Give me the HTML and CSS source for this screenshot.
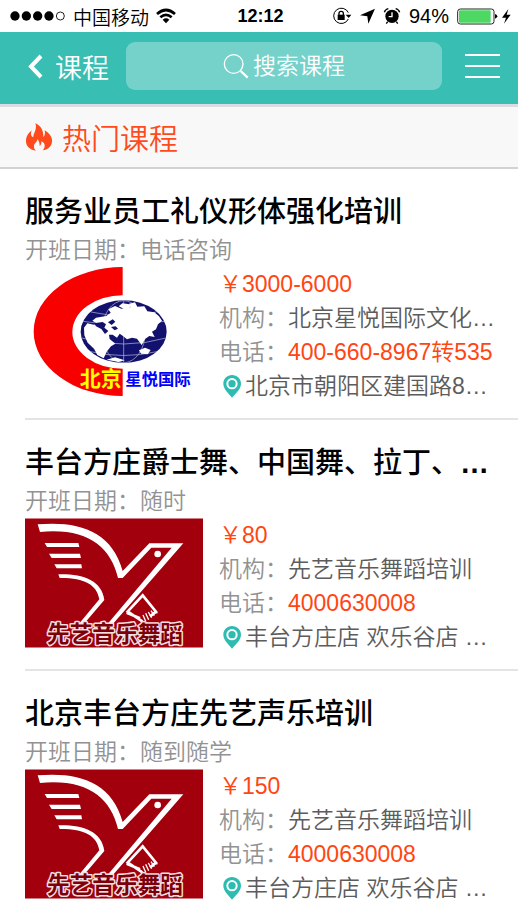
FILE: index.html
```html
<!DOCTYPE html>
<html lang="zh-CN">
<head>
<meta charset="utf-8">
<meta name="viewport" content="width=device-width, initial-scale=1">
<title>课程</title>
<link rel="stylesheet" href="styles.css">
</head>
<body>
<svg class="sprite" aria-hidden="true">
  <symbol id="pin" viewBox="38 342 54 72">
    <path d="M65 345C50 345 39 356 39 371C39 386 52 397 65 413C79 397 92 386 92 371C92 356 80 345 65 345Z" fill="#2fbcb0"/>
    <circle cx="65" cy="371" r="14" fill="none" stroke="#fff" stroke-width="6"/>
  </symbol>
  <symbol id="dance-logo" viewBox="29 37 534 388">
    <rect x="29" y="37" width="534" height="388" fill="#a3000d"/>
    <path d="M67 55C190 44 290 75 322 195L402 112H504L292 355H276L469 125H408L322 216H308C285 120 215 65 74 78Z" fill="#fff"/>
    <path d="M88 111H189L192 123H95ZM101 143H194L197 156H109ZM117 175H198L200 187H124ZM129 205C200 203 260 222 267 282L203 357H188L252 280C245 235 205 215 133 216Z" fill="#fff"/>
    <circle cx="427" cy="144" r="10" fill="#fff"/>
    <path d="M334 320L382 268L422 317L404 331M334 320L374 337M341 319L381 346" fill="none" stroke="#fff" stroke-width="8"/>
    <path d="M383 327L391 346M391 322L400 341M399 318L409 335M407 314L417 329M415 309L426 322" stroke="#fff" stroke-width="4"/>
  </symbol>
</svg>

<div class="status">
  <div class="status-side">
    <svg width="56" height="12" viewBox="30 32 168 36" aria-hidden="true"><g fill="#000"><circle cx="45" cy="50" r="14"/><circle cx="79" cy="50" r="14"/><circle cx="113" cy="50" r="14"/><circle cx="147" cy="50" r="14"/></g><circle cx="181" cy="50" r="12" fill="none" stroke="#222" stroke-width="3"/></svg>
    <span class="carrier">中国移动</span>
    <svg width="20" height="16" viewBox="472 24 60 48" aria-hidden="true"><g fill="none" stroke="#000" stroke-width="8"><path d="M475 42Q502 18 529 42"/><path d="M485 52Q502 37 519 52"/></g><path d="M492 59Q502 51 512 59L502 70Z"/></svg>
  </div>
  <time class="clock">12:12</time>
  <div class="status-side status-right">
    <svg width="20" height="18" viewBox="218 22 60 54" aria-hidden="true"><path d="M267 58A23 23 0 1 1 267 39" fill="none" stroke="#000" stroke-width="3"/><path d="M259 45H276L268 55Z"/><rect x="235" y="45" width="21" height="16"/><path d="M239 46V41Q239 35 245.500 35T252 41V46" fill="none" stroke="#000" stroke-width="4"/></svg>
    <svg width="15" height="16" viewBox="306 26 45 48" aria-hidden="true"><path d="M351 28L331 73L328 51L306 48Z"/></svg>
    <svg width="18" height="18" viewBox="377 22 54 54" aria-hidden="true"><circle cx="404" cy="50" r="20"/><path d="M404 38V51H394" fill="none" stroke="#fff" stroke-width="4"/><path d="M381 38Q384 29 393 27M415 27Q424 29 427 38M391 66L387 72M417 66L421 72" fill="none" stroke="#000" stroke-width="4"/></svg>
    <span class="percent">94%</span>
    <svg width="54" height="18" viewBox="596 22 162 54" aria-hidden="true"><rect x="598" y="28" width="109" height="45" rx="8" fill="#fff" stroke="#222" stroke-width="3"/><rect x="602" y="32" width="95" height="37" rx="3" fill="#4cd863"/><path d="M710 43Q717 46 717 50T710 57Z"/><path d="M750 28L731 54H743L737 72L757 45H745Z"/></svg>
  </div>
</div>

<header class="nav">
  <a class="back" href="#">
    <svg width="15" height="25" viewBox="0 0 15 25" aria-hidden="true"><path d="M13 2L3 12.500L13 23" fill="none" stroke="#fff" stroke-width="4"/></svg>
    <span>课程</span>
  </a>
  <label class="search">
    <svg width="26" height="26" viewBox="678 156 78 78" aria-hidden="true"><circle cx="710" cy="189" r="28" fill="none" stroke="#fff" stroke-width="4"/><path d="M731 210L752 230" stroke="#fff" stroke-width="7"/></svg>
    <input type="text" placeholder="搜索课程" aria-label="搜索课程">
  </label>
  <button class="menu" type="button" aria-label="菜单"><i></i><i></i><i></i></button>
</header>

<main>
  <h1 class="section">
    <svg width="26" height="28" viewBox="78 76 78 84" aria-hidden="true"><path d="M106 77C126 86 132 104 129 119C135 114 136 107 134 98C150 107 158 121 156 133C154 147 143 156 128 158C138 148 135 134 124 131C125 138 122 143 119 145C119 137 117 129 112 124C113 132 103 136 102 145C101 151 104 156 108 159C91 156 79 147 78 132C77 119 83 108 95 98C91 109 93 116 100 119C98 108 113 96 106 77Z" fill="#ff4a1c"/></svg>
    <span>热门课程</span>
  </h1>

  <article class="course">
    <h2>服务业员工礼仪形体强化培训</h2>
    <p class="date">开班日期：电话咨询</p>
    <div class="body">
      <svg class="logo" viewBox="30 33 534 390" role="img" aria-label="北京星悦国际">
        <path d="M323 33A267 193.500 0 0 0 323 420V338A151 110 0 0 1 323 118Z" fill="#f80000"/>
        <ellipse cx="326" cy="227" rx="129" ry="94" fill="#12126e"/>
        <g fill="none" stroke="#b9bddd" stroke-width="2"><ellipse cx="326" cy="227" rx="65" ry="93"/><path d="M326 134V320M204 196Q326 216 448 196M200 246Q326 282 453 246M226 287Q326 310 426 287M228 168Q326 190 424 168"/></g>
        <path d="M232 194L243 185L274 180L287 170L280 160L300 150L319 158L347 154L342 143L360 139L367 152L388 151L397 166L418 169L432 181L441 194L429 205L423 220L411 227L419 243L403 240L391 248L380 267L366 248L351 245L336 250L325 241L314 233L306 245L293 236L282 236L284 249L301 263L288 271L276 286L266 307L247 297L237 278L218 260L208 238L207 215L217 202L237 206L245 202Z" fill="#fff"/>
        <path d="M311 151L322 142L344 145L348 154L329 160ZM372 283L390 275L407 282L398 295L378 293ZM275 311L300 304L329 313L311 318Z" fill="#fff"/>
        <path d="M237 202L263 198L273 205L268 215L280 225L270 234L259 219L243 211ZM279 199L293 190L301 197L290 207ZM288 213L302 211L309 218L299 223Z" fill="#12126e"/>
        <text class="logo-city" x="194" y="389">北京</text>
        <text class="logo-name" x="331" y="388">星悦国际</text>
      </svg>
      <div class="info">
        <p class="price">￥3000-6000</p>
        <p><span class="key">机构：</span>北京星悦国际文化…</p>
        <p><span class="key">电话：</span><a href="tel:4006608967">400-660-8967转535</a></p>
        <p class="place"><svg width="18" height="24" aria-hidden="true"><use href="#pin"/></svg>北京市朝阳区建国路8…</p>
      </div>
    </div>
  </article>

  <article class="course">
    <h2>丰台方庄爵士舞、中国舞、拉丁、<b>…</b></h2>
    <p class="date">开班日期：随时</p>
    <div class="body">
      <svg class="logo" viewBox="0 0 534 388" role="img" aria-label="先艺音乐舞蹈"><use href="#dance-logo"/><text class="dance-name" x="270" y="370" text-anchor="middle">先艺音乐舞蹈</text></svg>
      <div class="info">
        <p class="price">￥80</p>
        <p><span class="key">机构：</span>先艺音乐舞蹈培训</p>
        <p><span class="key">电话：</span><a href="tel:4000630008">4000630008</a></p>
        <p class="place"><svg width="18" height="24" aria-hidden="true"><use href="#pin"/></svg>丰台方庄店 欢乐谷店 …</p>
      </div>
    </div>
  </article>

  <article class="course">
    <h2>北京丰台方庄先艺声乐培训</h2>
    <p class="date">开班日期：随到随学</p>
    <div class="body">
      <svg class="logo" viewBox="0 0 534 388" role="img" aria-label="先艺音乐舞蹈"><use href="#dance-logo"/><text class="dance-name" x="270" y="370" text-anchor="middle">先艺音乐舞蹈</text></svg>
      <div class="info">
        <p class="price">￥150</p>
        <p><span class="key">机构：</span>先艺音乐舞蹈培训</p>
        <p><span class="key">电话：</span><a href="tel:4000630008">4000630008</a></p>
        <p class="place"><svg width="18" height="24" aria-hidden="true"><use href="#pin"/></svg>丰台方庄店 欢乐谷店 …</p>
      </div>
    </div>
  </article>
</main>
</body>
</html>
```
FILE: styles.css
```css
* {
  box-sizing: border-box;
}

body {
  margin: 0;
  background: #fff;
  color: #5c5c5c;
  font-family: "Liberation Sans", "Noto Sans CJK SC", sans-serif;
  font-size: 23px;
  font-weight: 350;
}

h1, h2, p {
  margin: 0;
}

svg {
  flex: none;
}

.sprite {
  position: absolute;
  width: 0;
  height: 0;
}

/* Status bar */
.status {
  display: flex;
  align-items: center;
  height: 32px;
  padding: 0 7px 0 10px;
  color: #000;
  font-size: 20px;
}

.status-side {
  display: flex;
  flex: 1;
  align-items: center;
  gap: 7px;
}

.status-right {
  justify-content: flex-end;
  gap: 8px;
}

.carrier {
  font-size: 19px;
}

.clock {
  font-size: 18px;
  font-weight: 700;
}

/* Navigation bar */
.nav {
  display: flex;
  align-items: center;
  height: 75px;
  padding: 0 18px 4px 28px;
  border-bottom: 3px solid #dcdce0;
  background: #38beb3;
}

.back {
  display: flex;
  align-items: center;
  gap: 12px;
  width: 98px;
  color: #fff;
  font-size: 27px;
  text-decoration: none;
}

.search {
  display: flex;
  flex: 1;
  align-items: center;
  justify-content: center;
  gap: 4px;
  height: 48px;
  border-radius: 9px;
  background: #74d2ca;
}

.search input {
  width: 4em;
  padding: 0;
  border: 0;
  outline: 0;
  background: none;
  color: #fff;
  font: inherit;
}

.search input::placeholder {
  color: #fff;
  opacity: 1;
}

.menu {
  display: flex;
  flex-direction: column;
  gap: 9px;
  margin-left: 23px;
  padding: 0;
  border: 0;
  background: none;
}

.menu i {
  width: 35px;
  height: 2px;
  background: #fff;
}

/* Section heading */
.section {
  display: flex;
  align-items: center;
  gap: 10px;
  height: 62px;
  padding-left: 26px;
  border-bottom: 2px solid #d2d2d4;
  background: #f8f8f8;
  color: #ff4a1c;
  font-size: 29px;
  font-weight: 350;
}

/* Course list */
.course {
  margin-left: 25px;
  padding: 24px 0 15px;
  border-bottom: 2px solid #e4e4e4;
  white-space: nowrap;
}

.course:last-child {
  border-bottom: 0;
}

.course h2 {
  color: #000;
  font-size: 29px;
  font-weight: 500;
  line-height: 38px;
}

.course h2 b {
  font-weight: 700;
}

.date {
  padding-top: 2px;
  color: #929292;
  line-height: 34px;
}

.body {
  display: flex;
  gap: 16px;
}

.logo {
  width: 178px;
  height: 130px;
}

.info p {
  line-height: 34px;
}

.info .price,
.info a {
  color: #ff4612;
  text-decoration: none;
}

.key {
  color: #929292;
}

.place {
  display: flex;
  align-items: center;
  gap: 4px;
  padding-left: 4px;
}

.logo text {
  font-family: "Noto Sans CJK SC", sans-serif;
  font-weight: 700;
}

.logo-city {
  fill: #ff0;
  font-size: 63px;
}

.logo-name {
  fill: #00f;
  font-size: 49px;
}

.dance-name {
  fill: #7c0009;
  stroke: #f5dede;
  stroke-width: 9px;
  stroke-linejoin: round;
  paint-order: stroke;
  font-size: 68px;
}
```
